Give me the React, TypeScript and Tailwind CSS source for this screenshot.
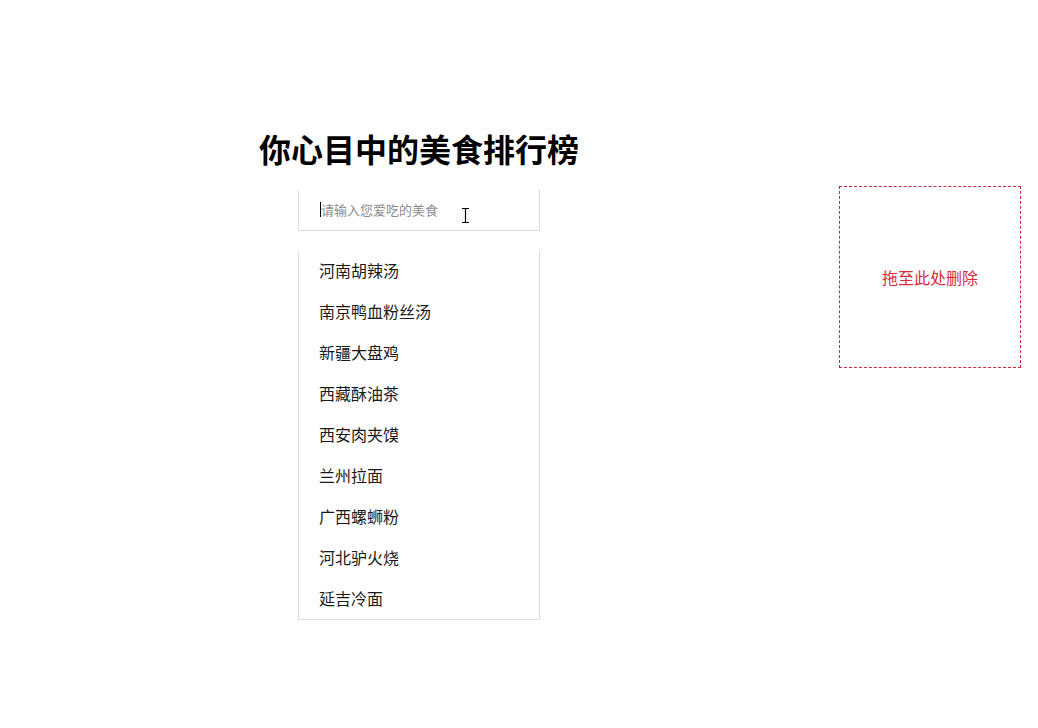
import React from "react";

const foods = [
  "河南胡辣汤",
  "南京鸭血粉丝汤",
  "新疆大盘鸡",
  "西藏酥油茶",
  "西安肉夹馍",
  "兰州拉面",
  "广西螺蛳粉",
  "河北驴火烧",
  "延吉冷面",
];

export default function App() {
  return (
    <div
      className="relative w-[1038px] h-[728px] bg-white overflow-hidden"
      style={{ fontFamily: '"Noto Sans CJK SC", "Noto Sans", sans-serif' }}
    >
      <div className="flex items-start pt-[128px]">
        <div className="ml-[259px] w-[320px] flex flex-col items-center">
          <h1 className="h-[40px] leading-[40px] text-[32px] font-bold text-black whitespace-nowrap">
            你心目中的美食排行榜
          </h1>
          <div className="relative mt-[22px] w-[242px] h-[41px] border-x border-b border-[#dcdce8] flex items-center pl-[21px] pb-[1px]">
            <span className="w-px h-[15px] bg-black" />
            <span className="text-[13px] text-[#8c8c8c] leading-none">请输入您爱吃的美食</span>
          </div>
          <ul className="mt-[19px] w-[242px] border-x border-b border-[#dcdce8] flex flex-col">
            {foods.map((f) => (
              <li key={f} className="h-[41px] flex items-center pl-[20px] pb-[2px] text-[16px] text-[#1a1a1a]">
                {f}
              </li>
            ))}
          </ul>
        </div>
        <div className="ml-[260px] mt-[58px] w-[182px] h-[182px] border border-dashed border-[#c8283a] flex items-center justify-center">
          <span className="text-[16px] text-[#d92a3c]">拖至此处删除</span>
        </div>
      </div>
      <svg
        className="absolute left-[461px] top-[207px]"
        width="9"
        height="17"
        viewBox="0 0 9 17"
      >
        <path d="M1 1.5h7M4.5 2v13M1 15.5h7" stroke="#000" strokeWidth="1.2" fill="none" />
      </svg>
    </div>
  );
}
